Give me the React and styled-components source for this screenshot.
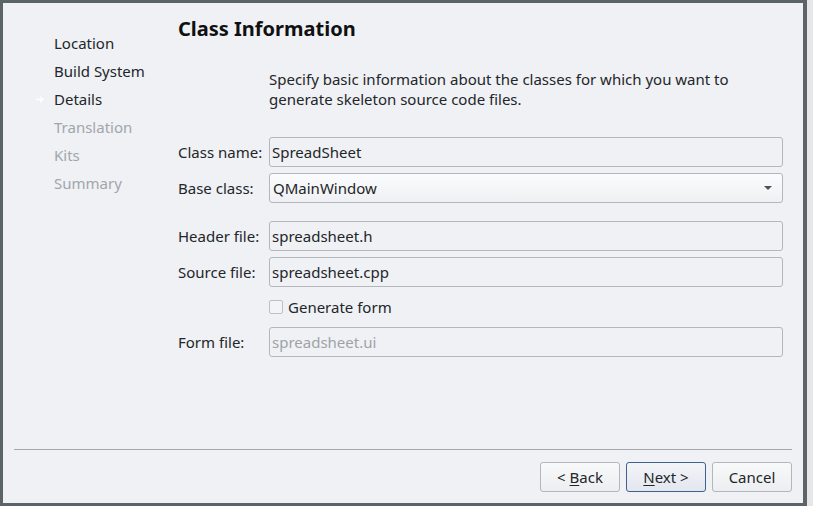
import React from "react";
import styled, { createGlobalStyle } from "styled-components";

const Global = createGlobalStyle`
  html, body { margin: 0; padding: 0; background: #e6e7e8; }
  body { font-family: "Noto Sans", "Open Sans", sans-serif; }
  * { box-sizing: border-box; }
`;

const Window = styled.div`
  width: 807px;
  height: 506px;
  border: 3px solid #5d6468;
  border-right-width: 4px;
  background: #eff1f5;
  display: flex;
  flex-direction: column;
  color: #232629;
  font-size: 15px;
`;

const Body = styled.div`
  flex: 1;
  display: flex;
`;

const Sidebar = styled.nav`
  width: 175px;
  padding: 26px 0 0 33px;
  display: flex;
  flex-direction: column;
`;

const Step = styled.div`
  display: flex;
  align-items: center;
  height: 28px;
  color: ${(p) => (p.$pending ? "#a1a6ab" : "#232629")};
`;

const Marker = styled.span`
  width: 18px;
  display: flex;
  align-items: center;
`;

const Main = styled.main`
  flex: 1;
  padding: 13px 20px 0 0;
  display: flex;
  flex-direction: column;
`;

const Title = styled.h1`
  margin: 0;
  font-size: 20px;
  font-weight: 700;
  line-height: 26px;
  color: #0f1012;
`;

const Description = styled.p`
  margin: 27px 0 0 91px;
  line-height: 20px;
  font-size: 15px;
`;

const Form = styled.div`
  margin-top: 28px;
  display: grid;
  grid-template-columns: 91px 1fr;
  row-gap: 6px;
  align-items: center;
`;

const Label = styled.label`
  line-height: 30px;
  white-space: nowrap;
`;

const Spacer = styled.div`
  grid-column: 1 / -1;
  height: 6px;
`;

const Field = styled.div`
  height: 30px;
  border: 1px solid #b3b7bb;
  border-radius: 3px;
  background: #eff1f5;
  padding: 0 0 0 2px;
  display: flex;
  align-items: center;
  color: ${(p) => (p.$disabled ? "#9fa3a8" : "#232629")};
`;

const Combo = styled.div`
  height: 30px;
  border: 1px solid #b3b7bb;
  border-radius: 3px;
  background: linear-gradient(#fbfcfd, #eef0f3);
  padding: 0 10px 0 3px;
  display: flex;
  align-items: center;
  justify-content: space-between;
`;

const Arrow = styled.span`
  width: 0;
  height: 0;
  border-left: 4px solid transparent;
  border-right: 4px solid transparent;
  border-top: 4px solid #4d5256;
`;

const CheckRow = styled.div`
  grid-column: 2;
  height: 28px;
  display: flex;
  align-items: center;
  gap: 5px;
`;

const Box = styled.span`
  width: 14px;
  height: 14px;
  border: 1px solid #bdc1c5;
  border-radius: 2px;
  background: #f3f4f6;
`;

const Footer = styled.footer`
  padding: 0 11px 11px 11px;
  display: flex;
  flex-direction: column;
`;

const Separator = styled.hr`
  margin: 0 0 12px 0;
  border: none;
  height: 1px;
  background: #a4a8ac;
`;

const Buttons = styled.div`
  display: flex;
  justify-content: flex-end;
  gap: 6px;
`;

const Button = styled.button`
  width: 80px;
  height: 30px;
  border: 1px solid ${(p) => (p.$default ? "#41608f" : "#b3b7bb")};
  border-radius: 3px;
  background: ${(p) =>
    p.$default
      ? "linear-gradient(#f2f4f8, #e3e7ee)"
      : "linear-gradient(#f8f9fa, #eceef1)"};
  font-family: inherit;
  font-size: 15px;
  color: #232629;
  padding: 0;
`;

const Mnemonic = styled.u`
  text-underline-offset: 2px;
`;

export default function App() {
  const steps = [
    { name: "Location" },
    { name: "Build System" },
    { name: "Details", current: true },
    { name: "Translation", pending: true },
    { name: "Kits", pending: true },
    { name: "Summary", pending: true },
  ];
  return (
    <>
      <Global />
      <Window>
        <Body>
          <Sidebar>
            {steps.map((s) => (
              <Step key={s.name} $pending={s.pending}>
                <Marker>
                  {s.current && (
                    <svg width="8" height="7" viewBox="0 0 8 7">
                      <path d="M0 3.5H7M4 0.8L7 3.5L4 6.2" stroke="#ffffff" strokeWidth="1.4" fill="none" />
                    </svg>
                  )}
                </Marker>
                {s.name}
              </Step>
            ))}
          </Sidebar>
          <Main>
            <Title>Class Information</Title>
            <Description>
              Specify basic information about the classes for which you want to
              <br />
              generate skeleton source code files.
            </Description>
            <Form>
              <Label>Class name:</Label>
              <Field>SpreadSheet</Field>
              <Label>Base class:</Label>
              <Combo>
                QMainWindow
                <Arrow />
              </Combo>
              <Spacer />
              <Label>Header file:</Label>
              <Field>spreadsheet.h</Field>
              <Label>Source file:</Label>
              <Field>spreadsheet.cpp</Field>
              <CheckRow>
                <Box />
                Generate form
              </CheckRow>
              <Label>Form file:</Label>
              <Field $disabled>spreadsheet.ui</Field>
            </Form>
          </Main>
        </Body>
        <Footer>
          <Separator />
          <Buttons>
            <Button>
              &lt; <Mnemonic>B</Mnemonic>ack
            </Button>
            <Button $default>
              <Mnemonic>N</Mnemonic>ext &gt;
            </Button>
            <Button>Cancel</Button>
          </Buttons>
        </Footer>
      </Window>
    </>
  );
}
